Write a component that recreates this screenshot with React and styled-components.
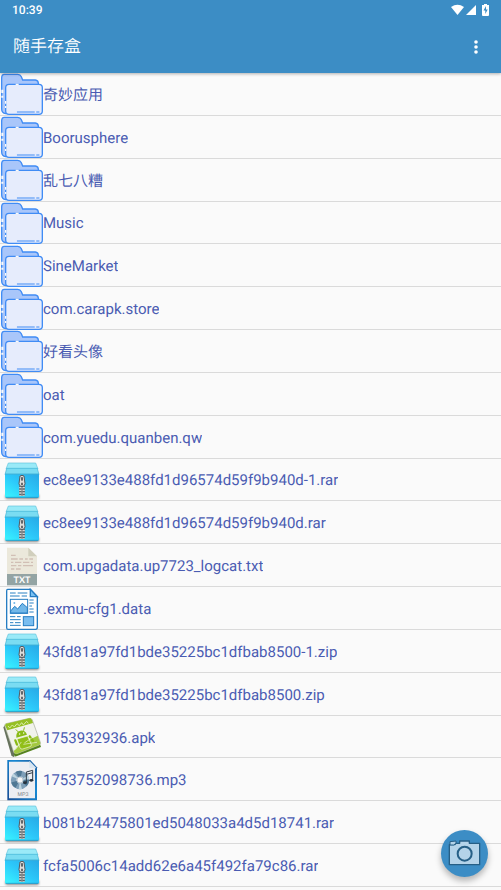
import React, { useId } from "react";
import styled, { createGlobalStyle } from "styled-components";

const GlobalStyle = createGlobalStyle`
  *, *::before, *::after { box-sizing: border-box; }
  body {
    margin: 0;
    background: #fafafa;
    font-family: Roboto, "Noto Sans CJK SC", sans-serif;
    text-rendering: geometricPrecision;
  }
`;

const Page = styled.div`
  display: flex;
  flex-direction: column;
  min-height: 100vh;
  padding-bottom: 3px;
`;

const Header = styled.header`
  position: relative;
  background: #3c8dc5;
  color: #fff;
  box-shadow: 0 1px 3px rgba(0, 0, 0, 0.3);
`;

const StatusBar = styled.div`
  display: flex;
  align-items: center;
  justify-content: space-between;
  height: 20px;
  padding: 0 12px;
  font-size: 12px;
  font-weight: 500;
`;

const StatusIcons = styled.svg`
  display: block;
  width: 38px;
  height: 12px;
`;

const AppBar = styled.div`
  display: flex;
  align-items: center;
  justify-content: space-between;
  height: 53px;
  padding: 0 10px 0 13px;
`;

const Title = styled.h1`
  margin: 0;
  font-size: 17px;
  font-weight: 350;
  line-height: 24px;
`;

const MenuButton = styled.button`
  display: grid;
  place-items: center;
  width: 30px;
  height: 40px;
  padding: 0;
  border: 0;
  background: none;
  color: inherit;
  cursor: pointer;
`;

const FileList = styled.ul`
  flex: 1;
  display: grid;
  grid-auto-rows: 1fr;
  margin: 0;
  padding: 0;
  list-style: none;
`;

const FileRow = styled.li`
  display: flex;
  box-shadow: inset 0 -1px #dadada;
`;

const FileLink = styled.a`
  flex: 1;
  display: flex;
  align-items: center;
  min-width: 0;
  color: #4a5cb2;
  font-size: 15px;
  line-height: 20px;
  text-decoration: none;
`;

const FileName = styled.span`
  overflow: hidden;
  padding-top: 1px;
  text-overflow: ellipsis;
  white-space: nowrap;
`;

const IconSvg = styled.svg`
  flex: none;
  display: block;
  width: 43px;
  height: 42px;
`;

const CameraButton = styled.button`
  position: fixed;
  right: 13px;
  bottom: 13px;
  display: grid;
  place-items: center;
  width: 47px;
  height: 47px;
  padding: 0;
  border: 0;
  border-radius: 50%;
  background: #3c8dc5;
  box-shadow: 0 4px 6px rgba(0, 0, 0, 0.28);
  cursor: pointer;
`;

function FolderIcon() {
  return (
    <IconSvg viewBox="0 -2 129 126" aria-hidden="true">
      <path d="M13 2H53Q61 2 64 9L68 19H106Q115 20 115 29V110L17 120Q5 118 5 106V13Q5 2 13 2Z" fill="#a9c6fa" stroke="#408cf5" strokeWidth="4" />
      <path d="M7 48V58M7 66V72" stroke="#fafafa" strokeWidth="6" />
      <rect x="17" y="32" width="110" height="90" rx="10" fill="#e6ecfc" stroke="#408cf5" strokeWidth="4" />
      <path d="M47 32H56M17 82V90M17 97V103" stroke="#fafafa" strokeWidth="4" />
      <path d="M52 115H103M110 115H117" stroke="#408cf5" strokeWidth="3" strokeLinecap="round" />
    </IconSvg>
  );
}

function ArchiveIcon() {
  const id = useId();
  return (
    <IconSvg viewBox="0 -2 129 126" aria-hidden="true">
      <defs>
        <linearGradient id={id} x1="0" y1="1" x2="1" y2="0">
          <stop offset="0" stopColor="#3af6ff" />
          <stop offset="0.5" stopColor="#2cc8fa" />
          <stop offset="1" stopColor="#28a9e6" />
        </linearGradient>
        <filter id={`${id}s`} x="-20%" y="-100%" width="140%" height="300%">
          <feGaussianBlur stdDeviation="3" />
        </filter>
      </defs>
      <rect x="16" y="104" width="101" height="14" rx="5" fill="#888" filter={`url(#${id}s)`} />
      <path d="M25 10H107L114 28H18Z" fill="#9aeaf8" stroke="#62c3dd" strokeWidth="2" />
      <path d="M20 26H112L117 45H15Z" fill="#7adcf2" stroke="#42b4d6" strokeWidth="2" />
      <path d="M15 44H117V110Q117 114 113 114H19Q15 114 15 110Z" fill={`url(#${id})`} />
      <path d="M15 43H117" stroke="#2aa5cf" strokeWidth="2" />
      <path d="M17 113H115" stroke="#1787bf" strokeWidth="2" />
      <path d="M66 79V108" stroke="#5d6468" strokeWidth="17" />
      <path d="M66 82V108" stroke="#d5d6d4" strokeWidth="17" strokeDasharray="4 4" />
      <path d="M66 78V108" stroke="#85898b" strokeWidth="4" />
      <path d="M60 49Q66 45 72 49L75 72Q75 80 66 81Q57 80 57 72Z" fill="#dedddb" stroke="#555b61" strokeWidth="3" />
      <rect x="63" y="52" width="6" height="11" rx="2" fill="#606569" />
      <path d="M63 69H69V77H63Z" fill="#686b6e" />
    </IconSvg>
  );
}

function TextIcon() {
  return (
    <IconSvg viewBox="0 -2 129 126" aria-hidden="true">
      <path d="M21 6H85L111 32V90H21Z" fill="#ebe8db" />
      <path d="M85 6L111 32H85Z" fill="#d1cfbd" />
      <path d="M33 29H47M33 40H53M58 40H69M75 40H83M88 40H99M33 50H40M45 50H64M69 50H88M93 50H99M33 60H49M54 60H64M69 60H99M33 70H43M48 70H62" stroke="#d1bfb5" strokeWidth="4" />
      <rect x="21" y="85" width="90" height="34" fill="#93a4a4" />
      <text x="66" y="112" textAnchor="middle" fontFamily="Lato, sans-serif" fontSize="27" fontWeight="700" fill="#fff">TXT</text>
    </IconSvg>
  );
}

function DataIcon() {
  return (
    <IconSvg viewBox="0 -2 129 126" aria-hidden="true">
      <path d="M23 2H91L112 24V116Q112 122 107 122H24Q20 122 20 117V7Q20 2 23 2Z" fill="#fff" stroke="#267dc2" strokeWidth="4" />
      <path d="M91 2V24H112Z" fill="#78c1f3" stroke="#267dc2" strokeWidth="4" />
      <path d="M30 13H47M53 13H82M30 22H59M65 22H81M88 34H101M88 43H101M88 52H96M88 61H101M88 70H101M30 84H46M51 84H62M30 93H62M30 102H40M45 102H62M30 110H62" stroke="#2980c2" strokeWidth="3" />
      <rect x="31" y="32" width="52" height="42" fill="#fff" stroke="#267dc2" strokeWidth="3" />
      <path d="M32 67L44 53L53 61L67 44L82 57V73H32Z" fill="#72b8e9" stroke="#267dc2" strokeWidth="3" />
      <circle cx="43" cy="43" r="3" fill="#72b8e9" />
      <rect x="70" y="84" width="31" height="27" fill="#79bdf0" stroke="#267dc2" strokeWidth="3" />
    </IconSvg>
  );
}

function ApkIcon() {
  return (
    <IconSvg viewBox="0 -2 129 126" aria-hidden="true">
      <path d="M10 32L15 26L42 108L43 121Q38 122 34 116Z" fill="#66725c" />
      <path d="M42 108L119 80L123 91L49 119Q41 121 42 108Z" fill="#55831d" />
      <path d="M14 27Q13 23 18 21L88 5Q94 4 97 10L121 77Q123 82 118 85L51 111Q44 113 41 106Z" fill="#f1f3ec" stroke="#a4aa96" strokeWidth="2" />
      <path d="M15 26L18 21L88 5Q94 4 96 10L99 19L22 41Z" fill="#95bf24" />
      <path d="M41 104L57 84L113 57L121 78Q122 82 117 85L50 111Q43 113 41 104Z" fill="#a3c93f" />
      <path d="M24 28L29 34L37 25L43 31L51 21L58 27L65 18L70 25L80 14L85 20" fill="none" stroke="#d8eda8" strokeWidth="3" />
      <path d="M49 63Q47 45 61 42Q75 39 81 54Z" fill="#8abb18" />
      <path d="M51 67L83 58L94 84Q95 88 90 90L68 97Q62 99 60 93Z" fill="#91bf18" stroke="#f3f8df" strokeWidth="2" />
      <path d="M54 45L48 39M71 41L73 33" stroke="#8aba17" strokeWidth="3" strokeLinecap="round" />
      <path d="M46 71L51 84M89 59L99 73" stroke="#8aba17" strokeWidth="7" strokeLinecap="round" />
      <path d="M73 79L108 55M70 83L111 77M64 76L46 99" stroke="#edf3da" strokeWidth="2" />
      <circle cx="59" cy="52" r="2" fill="#fff" />
      <circle cx="71" cy="49" r="2" fill="#fff" />
    </IconSvg>
  );
}

function MusicIcon() {
  const id = useId();
  return (
    <IconSvg viewBox="0 -2 129 126" aria-hidden="true">
      <defs>
        <linearGradient id={id} x1="0" y1="1" x2="1" y2="0">
          <stop offset="0" stopColor="#174c94" />
          <stop offset="0.6" stopColor="#1687d2" />
          <stop offset="1" stopColor="#225c9e" />
        </linearGradient>
      </defs>
      <path d="M22 1H91L111 23V122H22Z" fill={`url(#${id})`} />
      <path d="M27 6H87L105 26V116H27Z" fill="#eceef3" />
      <path d="M88 3L109 25H88Z" fill="#d8e5f1" />
      <circle cx="60" cy="61" r="19" fill="none" stroke="#7e9fb8" strokeWidth="17" />
      <circle cx="60" cy="61" r="19" fill="none" stroke="#4f7894" strokeWidth="17" strokeDasharray="14 25" />
      <circle cx="60" cy="61" r="19" fill="none" stroke="#bdd4df" strokeWidth="17" strokeDasharray="7 34" strokeDashoffset="16" />
      <circle cx="60" cy="61" r="9" fill="#f5f5f6" stroke="#9dafb9" strokeWidth="2" />
      <path d="M79 68V37L98 32V61M79 44L98 39" fill="none" stroke="#303b45" strokeWidth="3" />
      <ellipse cx="75" cy="69" rx="6" ry="4" fill="#26323d" />
      <ellipse cx="94" cy="62" rx="6" ry="4" fill="#26323d" />
      <text x="69" y="110" textAnchor="middle" fontFamily="Liberation Sans, sans-serif" fontSize="16" fill="#777b80">MP3</text>
    </IconSvg>
  );
}

const icons = {
  folder: FolderIcon,
  archive: ArchiveIcon,
  text: TextIcon,
  data: DataIcon,
  apk: ApkIcon,
  music: MusicIcon,
};

const files = [
  ["folder", "奇妙应用"],
  ["folder", "Boorusphere"],
  ["folder", "乱七八糟"],
  ["folder", "Music"],
  ["folder", "SineMarket"],
  ["folder", "com.carapk.store"],
  ["folder", "好看头像"],
  ["folder", "oat"],
  ["folder", "com.yuedu.quanben.qw"],
  ["archive", "ec8ee9133e488fd1d96574d59f9b940d-1.rar"],
  ["archive", "ec8ee9133e488fd1d96574d59f9b940d.rar"],
  ["text", "com.upgadata.up7723_logcat.txt"],
  ["data", ".exmu-cfg1.data"],
  ["archive", "43fd81a97fd1bde35225bc1dfbab8500-1.zip"],
  ["archive", "43fd81a97fd1bde35225bc1dfbab8500.zip"],
  ["apk", "1753932936.apk"],
  ["music", "1753752098736.mp3"],
  ["archive", "b081b24475801ed5048033a4d5d18741.rar"],
  ["archive", "fcfa5006c14add62e6a45f492fa79c86.rar"],
];

export default function App() {
  return (
    <>
      <GlobalStyle />
      <Page lang="zh-CN">
        <Header>
          <StatusBar>
            <time>10:39</time>
            <StatusIcons viewBox="0 0 38 12" fill="#fff" aria-hidden="true">
              <path d="M0 3Q6.500 -1.500 13 3L6.500 11Z" />
              <path d="M25 1V11H15Z" />
              <path d="M33 0H36V1H38V11Q38 12 37 12H32Q31 12 31 11V1H33Z" />
              <path d="M35 2L32.500 6.500H34.300V10L36.700 5.500H35Z" fill="#3c8dc5" />
            </StatusIcons>
          </StatusBar>
          <AppBar>
            <Title>随手存盒</Title>
            <MenuButton type="button" aria-label="更多选项">
              <svg width="4" height="14" viewBox="0 0 4 14" fill="currentColor" aria-hidden="true">
                <circle cx="2" cy="2" r="1.800" />
                <circle cx="2" cy="7" r="1.800" />
                <circle cx="2" cy="12" r="1.800" />
              </svg>
            </MenuButton>
          </AppBar>
        </Header>
        <FileList>
          {files.map(([kind, name]) => {
            const Icon = icons[kind];
            return (
              <FileRow key={name}>
                <FileLink href="#">
                  <Icon />
                  <FileName>{name}</FileName>
                </FileLink>
              </FileRow>
            );
          })}
        </FileList>
        <CameraButton type="button" aria-label="拍照">
          <svg width="33" height="27" viewBox="0 0 99 81" aria-hidden="true">
            <path d="M4 14V74H95V10H64V3H35V10H24L20 14Z" fill="#b4d3e9" stroke="#265f86" strokeWidth="4" strokeLinejoin="round" />
            <path d="M6 5L24 3V10L17 15H6Z" fill="#b4d3e9" stroke="#265f86" strokeWidth="3" />
            <circle cx="50" cy="41" r="21" fill="#b4d3e9" stroke="#265f86" strokeWidth="6" />
          </svg>
        </CameraButton>
      </Page>
    </>
  );
}
